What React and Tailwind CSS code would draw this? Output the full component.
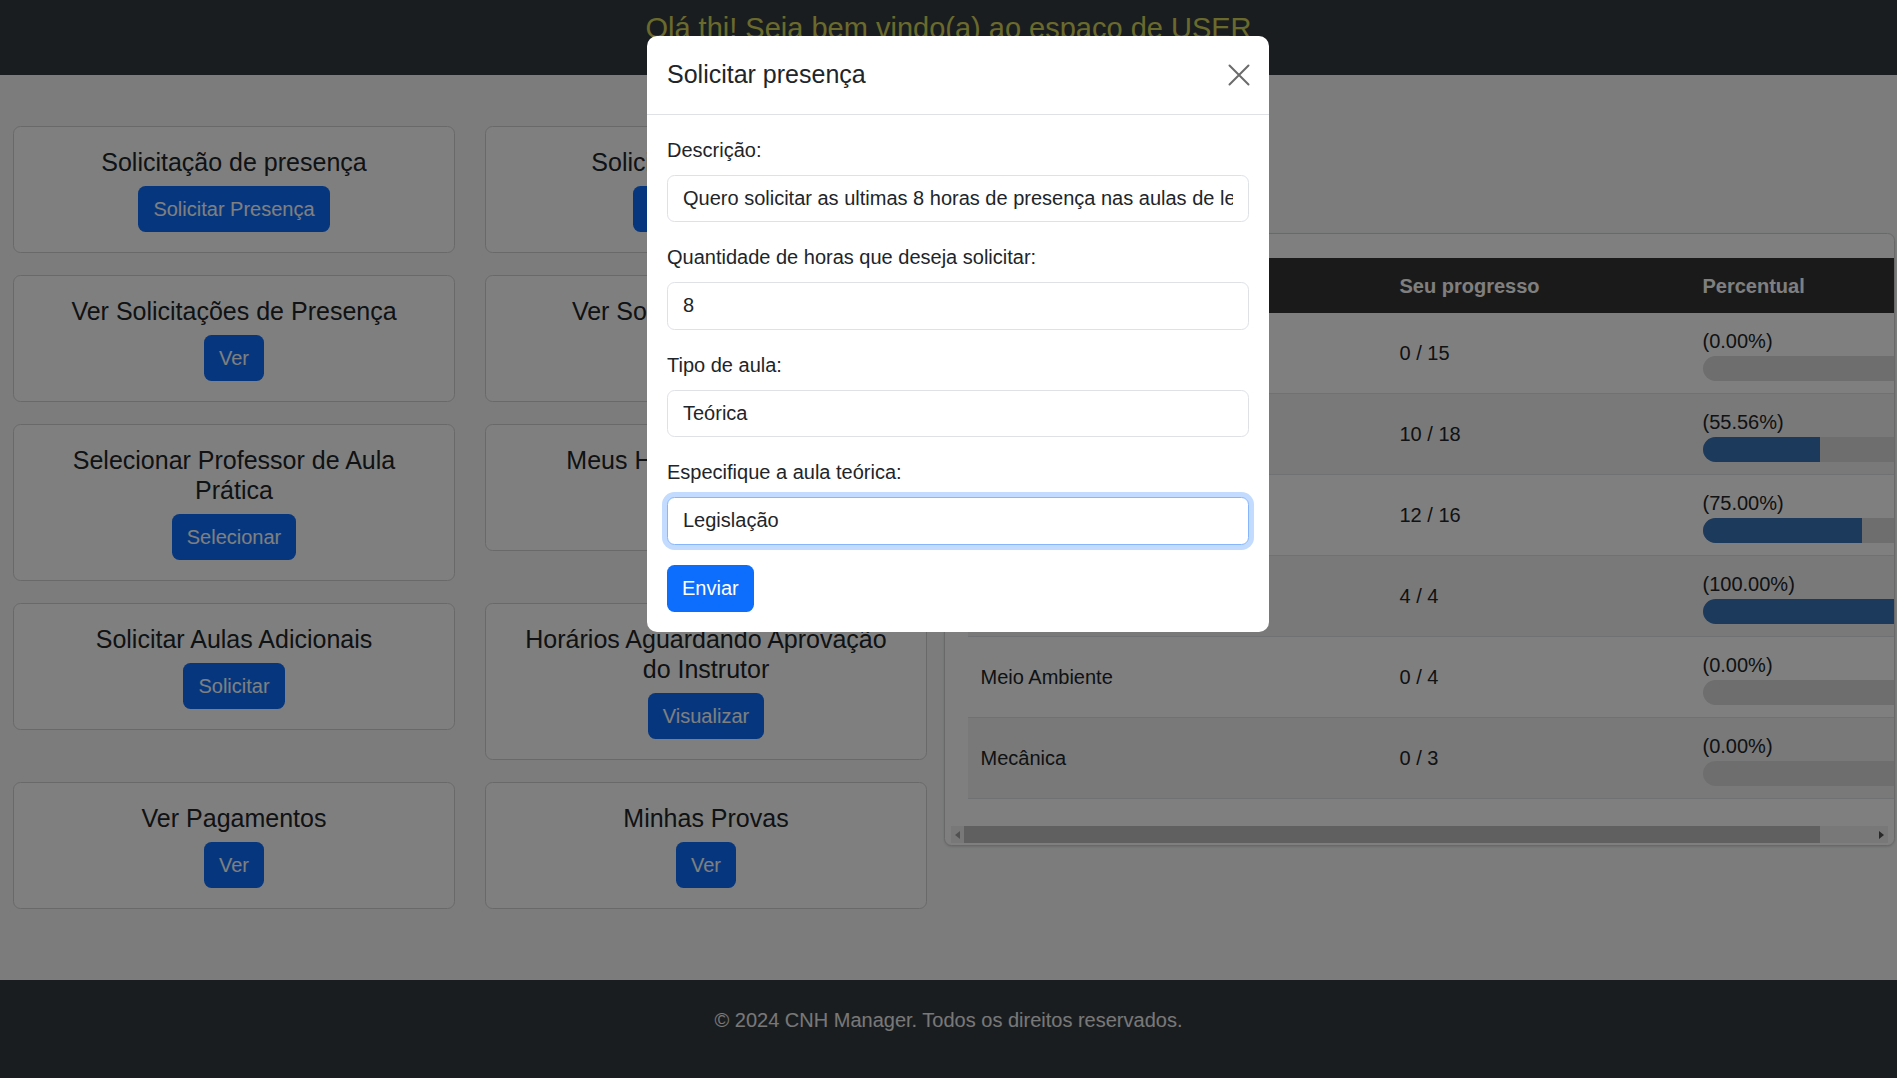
import React from "react";

const cards = [
  [
    { t: "Solicitação de presença", b: "Solicitar Presença" },
    { t: "Solicitar Aula Prática", b: "Solicitar Aula" },
  ],
  [
    { t: "Ver Solicitações de Presença", b: "Ver" },
    { t: "Ver Solicitações de Aula", b: "Ver" },
  ],
  [
    { t: "Selecionar Professor de Aula Prática", b: "Selecionar" },
    { t: "Meus Horários Marcados", b: "Ver" },
  ],
  [
    { t: "Solicitar Aulas Adicionais", b: "Solicitar" },
    { t: "Horários Aguardando Aprovação do Instrutor", b: "Visualizar" },
  ],
  [
    { t: "Ver Pagamentos", b: "Ver" },
    { t: "Minhas Provas", b: "Ver" },
  ],
];

const rows = [
  { n: "Aulas Práticas", d: 0, t: 15 },
  { n: "Legislação", d: 10, t: 18 },
  { n: "Direção Defensiva", d: 12, t: 16 },
  { n: "Primeiros Socorros", d: 4, t: 4 },
  { n: "Meio Ambiente", d: 0, t: 4 },
  { n: "Mecânica", d: 0, t: 3 },
];

function Card({ t, b }) {
  return (
    <div className="rounded-[7.5px] border border-[#d3d3d3] bg-white px-[22px] py-[20px] text-center">
      <h5 className="mb-[9px] text-[25px] font-medium leading-[30px] text-[#212529]">{t}</h5>
      <button className="h-[46px] rounded-[7.5px] bg-[#0d6efd] px-[15px] text-[20px] leading-[30px] text-white">
        {b}
      </button>
    </div>
  );
}

function Field({ label, value, focused }) {
  return (
    <div className="mb-[20px]">
      <label className="mb-[10px] block text-[20px] leading-[30px] text-[#212529]">{label}</label>
      <input
        readOnly
        value={value}
        className={
          focused
            ? "block h-[47.5px] w-full rounded-[7.5px] border border-[#86b7fe] bg-white px-[15px] text-[20px] text-[#212529] shadow-[0_0_0_5px_rgba(13,110,253,0.25)] outline-none"
            : "block h-[47.5px] w-full rounded-[7.5px] border border-[#dee2e6] bg-white px-[15px] text-[20px] text-[#212529] outline-none"
        }
      />
    </div>
  );
}

export default function App() {
  return (
    <div className="relative min-h-screen font-['Liberation_Sans',Arial,sans-serif] text-[#212529]">
      <header className="h-[75px] bg-[#343a40] pt-[10px] text-center">
        <h1 className="text-[29px] font-normal leading-[36px] text-[#d4d45a]">
          Olá thi! Seja bem vindo(a) ao espaco de USER
        </h1>
      </header>

      <main className="flex items-start bg-[#f8f9fa] pb-[71px] pl-[13px] pr-[2px] pt-[51px]">
        <div className="grid shrink-0 grid-cols-[442px_442px] content-start items-start gap-x-[30px] gap-y-[22px]">
          {cards.map((row, i) => (
            <React.Fragment key={i}>
              <Card {...row[0]} />
              <Card {...row[1]} />
            </React.Fragment>
          ))}
        </div>

        <div className="ml-[17px] mt-[107px] flex min-w-0 flex-1 flex-col overflow-hidden rounded-[7.5px] border border-[#d3d3d3] bg-white pb-[2px] shadow-sm">
          <div className="overflow-hidden pb-[27px] pl-[23px] pt-[24px]">
            <table className="w-[958px] table-fixed border-collapse text-left text-[20px] leading-[30px]">
              <colgroup>
                <col className="w-[419px]" />
                <col className="w-[303px]" />
                <col className="w-[236px]" />
              </colgroup>
              <thead>
                <tr className="bg-[#353535] text-white">
                  <th className="px-[12.5px] py-[12.5px] font-bold">Matéria</th>
                  <th className="px-[12.5px] py-[12.5px] font-bold">Seu progresso</th>
                  <th className="px-[12.5px] py-[12.5px] font-bold">Percentual</th>
                </tr>
              </thead>
              <tbody>
                {rows.map((r, i) => {
                  const pct = (r.d / r.t) * 100;
                  return (
                    <tr
                      key={r.n}
                      className={
                        i % 2 === 1
                          ? "border-b border-[#dee2e6] bg-[#f2f2f2]"
                          : "border-b border-[#dee2e6] bg-white"
                      }
                    >
                      <td className="px-[12.5px] py-[12.5px] align-middle">{r.n}</td>
                      <td className="px-[12.5px] py-[12.5px] align-middle">
                        {r.d} / {r.t}
                      </td>
                      <td className="px-[12.5px] py-[12.5px] align-middle">
                        <div>({pct.toFixed(2)}%)</div>
                        <div className="h-[25px] w-[212px] overflow-hidden rounded-full bg-[#dcdcdc]">
                          <div className="h-full bg-[#3674b8]" style={{ width: `${pct}%` }} />
                        </div>
                      </td>
                    </tr>
                  );
                })}
              </tbody>
            </table>
          </div>
          <div className="mx-[6px] flex h-[17px] items-center bg-[#f1f1f1]">
            <div className="flex w-[13px] justify-center">
              <svg width="5" height="8" viewBox="0 0 5 8">
                <polygon points="5,0 0,4 5,8" fill="#a3a3a3" />
              </svg>
            </div>
            <div className="flex h-full flex-1 items-stretch">
              <div className="h-full w-[94%] bg-[#c1c1c1]" />
            </div>
            <div className="flex w-[13px] justify-center">
              <svg width="5" height="8" viewBox="0 0 5 8">
                <polygon points="0,0 5,4 0,8" fill="#505050" />
              </svg>
            </div>
          </div>
        </div>
      </main>

      <footer className="h-[98px] bg-[#343a40] pt-[25px] text-center text-[20px] leading-[30px] text-[#f0f0f0]">
        © 2024 CNH Manager. Todos os direitos reservados.
      </footer>

      <div className="absolute inset-0 bg-black/50" />

      <div className="absolute left-[647px] top-[36px] w-[622px] rounded-[10px] bg-white">
        <div className="flex items-center justify-between border-b border-[#dee2e6] p-[20px]">
          <h5 className="text-[25px] font-medium leading-[37.5px] text-[#212529]">Solicitar presença</h5>
          <button className="mr-[-5px] flex h-[30px] w-[30px] items-center justify-center">
            <svg width="22" height="22" viewBox="0 0 22 22">
              <path d="M1.5 1.5 L20.5 20.5 M20.5 1.5 L1.5 20.5" stroke="#6b6b6b" strokeWidth="2" strokeLinecap="round" />
            </svg>
          </button>
        </div>
        <div className="p-[20px]">
          <Field
            label="Descrição:"
            value="Quero solicitar as ultimas 8 horas de presença nas aulas de legislação"
          />
          <Field label="Quantidade de horas que deseja solicitar:" value="8" />
          <Field label="Tipo de aula:" value="Teórica" />
          <Field label="Especifique a aula teórica:" value="Legislação" focused />
          <button className="h-[47.5px] rounded-[7.5px] bg-[#0d6efd] px-[15px] text-[20px] leading-[30px] text-white">
            Enviar
          </button>
        </div>
      </div>
    </div>
  );
}
